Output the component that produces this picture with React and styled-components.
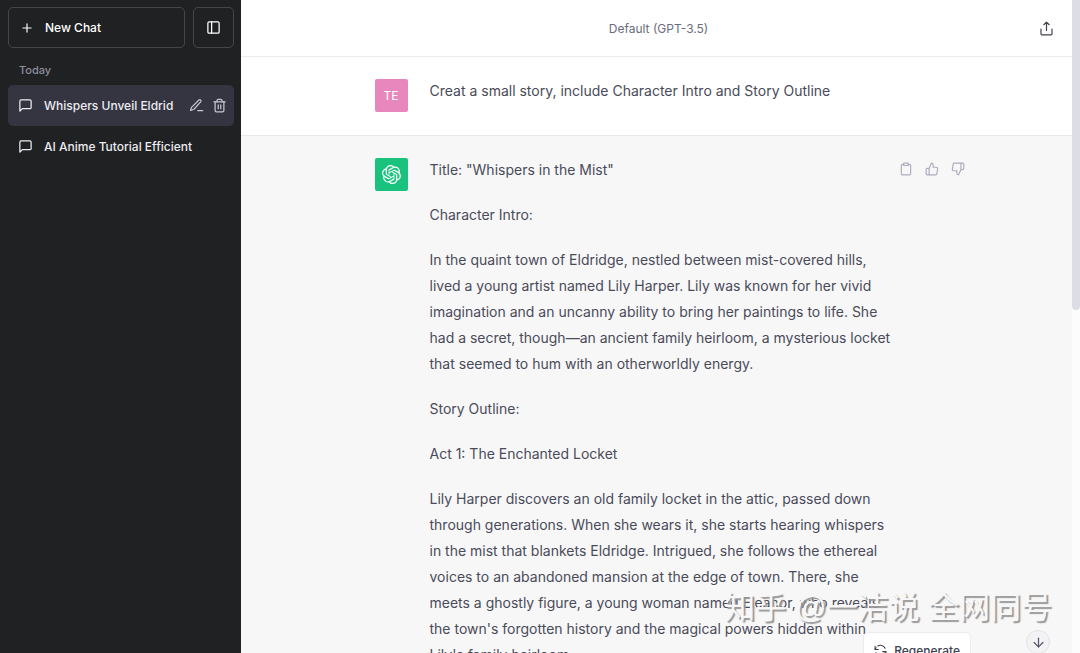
import React from 'react'
import styled, { createGlobalStyle } from 'styled-components';
import {
    FiArrowDown,
    FiClipboard,
    FiMessageSquare,
    FiPlus,
    FiSidebar,
    FiThumbsDown,
    FiThumbsUp,
    FiTrash2,
} from 'react-icons/fi';
import { SiOpenai } from 'react-icons/si';

const story = [
    `Title: "Whispers in the Mist"`,
    `Character Intro:`,
    `In the quaint town of Eldridge, nestled between mist-covered hills,
lived a young artist named Lily Harper. Lily was known for her vivid
imagination and an uncanny ability to bring her paintings to life. She
had a secret, though—an ancient family heirloom, a mysterious locket
that seemed to hum with an otherworldly energy.`,
    `Story Outline:`,
    `Act 1: The Enchanted Locket`,
    `Lily Harper discovers an old family locket in the attic, passed down
through generations. When she wears it, she starts hearing whispers
in the mist that blankets Eldridge. Intrigued, she follows the ethereal
voices to an abandoned mansion at the edge of town. There, she
meets a ghostly figure, a young woman named Eleanor, who reveals
the town's forgotten history and the magical powers hidden within
Lily's family heirloom.`,
]

function ShareIcon() {
    return (
        <svg width="13" height="15" viewBox="0 0 13 15" fill="none" stroke="currentColor" strokeWidth="1.2" strokeLinecap="round" strokeLinejoin="round">
            <path d="M1 8v4.8a1 1 0 0 0 1 1h9a1 1 0 0 0 1-1V8" />
            <path d="M6.5 9.5V1.2M3.8 3.7l2.7-2.6 2.7 2.6" />
        </svg>
    )
}

function PencilIcon() {
    return (
        <svg width="15" height="15" viewBox="0 0 24 24" fill="none" stroke="currentColor" strokeWidth="2" strokeLinecap="round" strokeLinejoin="round">
            <path d="M15.5 3.5a2.1 2.1 0 0 1 3.2 2.8L8 18l-5.5 2L4 15z" />
            <path d="M14 20h8" />
        </svg>
    )
}

function RegenerateIcon() {
    return (
        <svg width="13" height="13" viewBox="0 0 24 24" fill="none" stroke="currentColor" strokeWidth="2" strokeLinecap="round" strokeLinejoin="round">
            <path d="M2 4v6h6M22 20v-6h-6" />
            <path d="M7 3.6A9.5 9.5 0 0 1 20.5 8M2 10l2-3M22 14l-2 3M3.5 16A9.5 9.5 0 0 0 17 20.4" />
        </svg>
    )
}

function Sidebar() {
    return (
        <SidebarWrapper>
            <SidebarTop>
                <NewChatButton type="button"><FiPlus size={14} /> New Chat</NewChatButton>
                <ToggleButton type="button" aria-label="Hide sidebar"><FiSidebar size={15} /></ToggleButton>
            </SidebarTop>

            <h2>Today</h2>

            <ChatRow $active>
                <a href="#whispers"><FiMessageSquare size={15} /> Whispers Unveil Eldrid</a>
                <button type="button" aria-label="Rename"><PencilIcon /></button>
                <button type="button" aria-label="Delete"><FiTrash2 size={15} /></button>
            </ChatRow>
            <ChatRow>
                <a href="#anime"><FiMessageSquare size={15} /> AI Anime Tutorial Efficient</a>
            </ChatRow>
        </SidebarWrapper>
    )
}

function App() {
    return (
        <Page>
            <GlobalStyle />
            <Sidebar />

            <Main>
                <Header>
                    <h1>Default (GPT-3.5)</h1>
                    <button type="button" aria-label="Share"><ShareIcon /></button>
                </Header>

                <Turn>
                    <TurnInner>
                        <Avatar $color="#e887be">TE</Avatar>
                        <Message>
                            <p>Creat a small story, include Character Intro and Story Outline</p>
                        </Message>
                    </TurnInner>
                </Turn>

                <Turn $reply>
                    <TurnInner>
                        <Avatar $color="#19c37d"><SiOpenai size={19} /></Avatar>
                        <Message>
                            {story.map((text) => <p key={text}>{text}</p>)}
                        </Message>
                        <Actions>
                            <button type="button" aria-label="Copy"><FiClipboard size={14} /></button>
                            <button type="button" aria-label="Good reply"><FiThumbsUp size={14} /></button>
                            <button type="button" aria-label="Bad reply"><FiThumbsDown size={14} /></button>
                        </Actions>
                    </TurnInner>
                </Turn>

                <RegenerateButton type="button"><RegenerateIcon /> Regenerate</RegenerateButton>
                <ScrollButton type="button" aria-label="Scroll to bottom"><FiArrowDown size={15} /></ScrollButton>
                <Watermark>知乎 @一洁说 全网同号</Watermark>
            </Main>

            <ScrollTrack><ScrollThumb /></ScrollTrack>
        </Page>
    )
}

export default App

const GlobalStyle = createGlobalStyle`
  * {
    box-sizing: border-box;
    margin: 0;
    padding: 0;
  }

  body {
    font-family: Inter, "Liberation Sans", sans-serif;
    overflow: hidden;
  }

  button {
    border: none;
    background: none;
    color: inherit;
    font: inherit;
    display: flex;
    align-items: center;
    cursor: pointer;
  }

  svg {
    flex-shrink: 0;
  }
`;

const Page = styled.div`
  display: flex;
  height: 100vh;
  overflow: hidden;
`;

const SidebarWrapper = styled.nav`
  flex: 0 0 241px;
  min-width: 0;
  padding: 7px 7px 7px 8px;
  background-color: #202123;
  color: #ececf1;
  font-size: 12px;
  font-weight: 500;

  h2 {
    padding: 15px 11px 8px;
    font-size: 11px;
    line-height: 14px;
    font-weight: 500;
    color: #8e8ea0;
  }
`;

const SidebarTop = styled.div`
  display: flex;
  gap: 8px;
`;

const NewChatButton = styled.button`
  flex: 1;
  height: 41px;
  padding: 0 11px;
  gap: 11px;
  border: 1px solid #45464b;
  border-radius: 5px;
  color: #fff;
`;

const ToggleButton = styled.button`
  width: 41px;
  height: 41px;
  justify-content: center;
  border: 1px solid #45464b;
  border-radius: 5px;
  color: #fff;
`;

const ChatRow = styled.div`
  display: flex;
  align-items: center;
  gap: 8px;
  height: 41px;
  padding: 0 7px 0 10px;
  border-radius: 5px;
  background-color: ${(props) => (props.$active ? '#343541' : 'transparent')};

  a {
    flex: 1;
    display: flex;
    align-items: center;
    gap: 11px;
    color: inherit;
    text-decoration: none;
    white-space: nowrap;
  }

  button {
    color: #c5c5d2;
  }
`;

const Main = styled.main`
  position: relative;
  flex: 1;
  min-width: 0;
  overflow: hidden;
  background-color: #f7f7f8;
`;

const Header = styled.header`
  display: grid;
  grid-template-columns: 1fr auto 1fr;
  align-items: center;
  height: 57px;
  padding: 0 19px 0 23px;
  border-bottom: 1px solid #ececee;
  background-color: #fff;

  h1 {
    grid-column: 2;
    font-size: 12px;
    font-weight: 400;
    color: #6b6c7b;
  }

  button {
    justify-self: end;
    color: #40414f;
  }
`;

const Turn = styled.section`
  padding: 22px 0 23px 26px;
  background-color: ${(props) => (props.$reply ? '#f7f7f8' : '#fff')};
  border-bottom: 1px solid #e8e8ea;
`;

const TurnInner = styled.div`
  display: flex;
  align-items: flex-start;
  gap: 22px;
  max-width: 590px;
  margin: 0 auto;
`;

const Avatar = styled.div`
  flex: 0 0 33px;
  height: 33px;
  display: flex;
  align-items: center;
  justify-content: center;
  border-radius: 2px;
  background-color: ${(props) => props.$color};
  color: #fff;
  font-size: 12px;
`;

const Message = styled.div`
  flex: 1;
  min-width: 0;
  display: flex;
  flex-direction: column;
  gap: 19px;
  margin-top: -1px;
  color: #4a4b58;
  font-size: 14px;
  line-height: 26px;

  p {
    white-space: pre;
  }
`;

const Actions = styled.div`
  display: flex;
  gap: 12px;
  padding-top: 4px;
  color: #acacbe;
`;

const RegenerateButton = styled.button`
  position: absolute;
  right: 101px;
  bottom: -15px;
  height: 36px;
  padding: 0 10px;
  gap: 7px;
  border: 1px solid #ececee;
  border-radius: 5px;
  background-color: #fff;
  color: #40414f;
  font-size: 12px;
  font-weight: 500;
`;

const ScrollButton = styled.button`
  position: absolute;
  right: 22px;
  bottom: -1px;
  width: 24px;
  height: 24px;
  justify-content: center;
  border: 1px solid #e2e2e6;
  border-radius: 50%;
  background-color: #f3f3f5;
  color: #565869;
`;

const Watermark = styled.div`
  position: absolute;
  right: 20px;
  bottom: 23px;
  color: #f7f7f8;
  font-family: "Liberation Sans", "Noto Sans CJK SC", sans-serif;
  font-size: 31px;
  line-height: 44px;
  white-space: nowrap;
  text-shadow: 2px 2px 1px #999;
`;

const ScrollTrack = styled.div`
  flex: 0 0 8px;
  background-color: #fcfcfc;
`;

const ScrollThumb = styled.div`
  height: 310px;
  border-radius: 0 0 4px 4px;
  background-color: #dddde5;
`;
